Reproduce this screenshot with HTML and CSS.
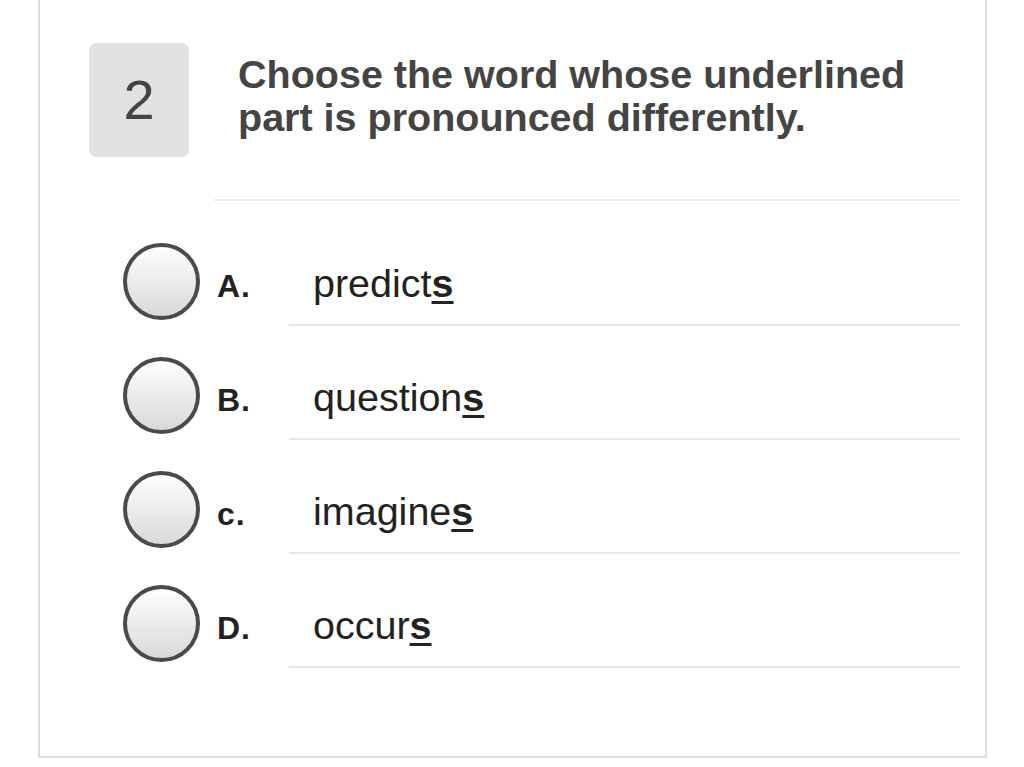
FILE: index.html
```html
<!DOCTYPE html>
<html lang="en">
<head>
<meta charset="utf-8">
<title>Question 2</title>
<link rel="stylesheet" href="styles.css">
</head>
<body>
<div class="card">
  <div class="question">
    <div class="qnum">2</div>
    <div class="qtext">Choose the word whose underlined part is pronounced differently.</div>
  </div>
  <div class="qsep"></div>
  <div class="options">
    <div class="option">
      <span class="radio"></span>
      <div class="obody">
        <span class="olabel">A.</span>
        <span class="otext">predict<u>s</u></span>
      </div>
    </div>
    <div class="option">
      <span class="radio"></span>
      <div class="obody">
        <span class="olabel">B.</span>
        <span class="otext">question<u>s</u></span>
      </div>
    </div>
    <div class="option">
      <span class="radio"></span>
      <div class="obody">
        <span class="olabel">c.</span>
        <span class="otext">imagine<u>s</u></span>
      </div>
    </div>
    <div class="option">
      <span class="radio"></span>
      <div class="obody">
        <span class="olabel">D.</span>
        <span class="otext">occur<u>s</u></span>
      </div>
    </div>
  </div>
</div>
</body>
</html>
```

FILE: styles.css
```css
html, body {
  margin: 0;
  padding: 0;
  background: #fff;
}
body {
  font-family: "Liberation Sans", Arial, Helvetica, sans-serif;
  color: #222;
}
.card {
  margin-left: 38px;
  width: 945px;
  height: 756px;
  border: 2px solid #dedede;
  border-top: none;
  background: #fff;
  box-sizing: content-box;
}
.question {
  display: flex;
  align-items: flex-start;
  padding-top: 43px;
  padding-left: 49px;
}
.qnum {
  flex: 0 0 auto;
  width: 100px;
  height: 114px;
  border-radius: 7px;
  background: #e2e2e2;
  color: #444;
  font-size: 56px;
  line-height: 114px;
  text-align: center;
}
.qtext {
  margin-left: 49px;
  margin-top: 10px;
  width: 710px;
  font-size: 39.5px;
  line-height: 43px;
  font-weight: bold;
  color: #444;
}
.qsep {
  margin: 42px 25px 0 174px;
  height: 2px;
  background: #ececec;
}
.options {
  padding-top: 42px;
}
.option {
  display: flex;
  align-items: flex-start;
  margin-bottom: 31px;
}
.radio {
  flex: 0 0 auto;
  width: 69px;
  height: 69px;
  margin-left: 83px;
  border: 4px solid #4a4a4a;
  border-radius: 50%;
  background: linear-gradient(#fefefe, #d9d9d9);
}
.obody {
  flex: 1 1 auto;
  display: flex;
  align-items: baseline;
  margin-left: 17px;
  margin-right: 25px;
  height: 83px;
}
.olabel {
  flex: 0 0 72px;
  font-size: 32px;
  font-weight: bold;
  letter-spacing: 1px;
  line-height: 81px;
  color: #222;
}
.otext {
  flex: 1 1 auto;
  padding-left: 24px;
  font-size: 39.5px;
  line-height: 81px;
  height: 81px;
  border-bottom: 2px solid #e8e8e8;
  color: #222;
}
.otext u {
  font-weight: bold;
  text-decoration-thickness: 3px;
  text-underline-offset: 4px;
}
```
